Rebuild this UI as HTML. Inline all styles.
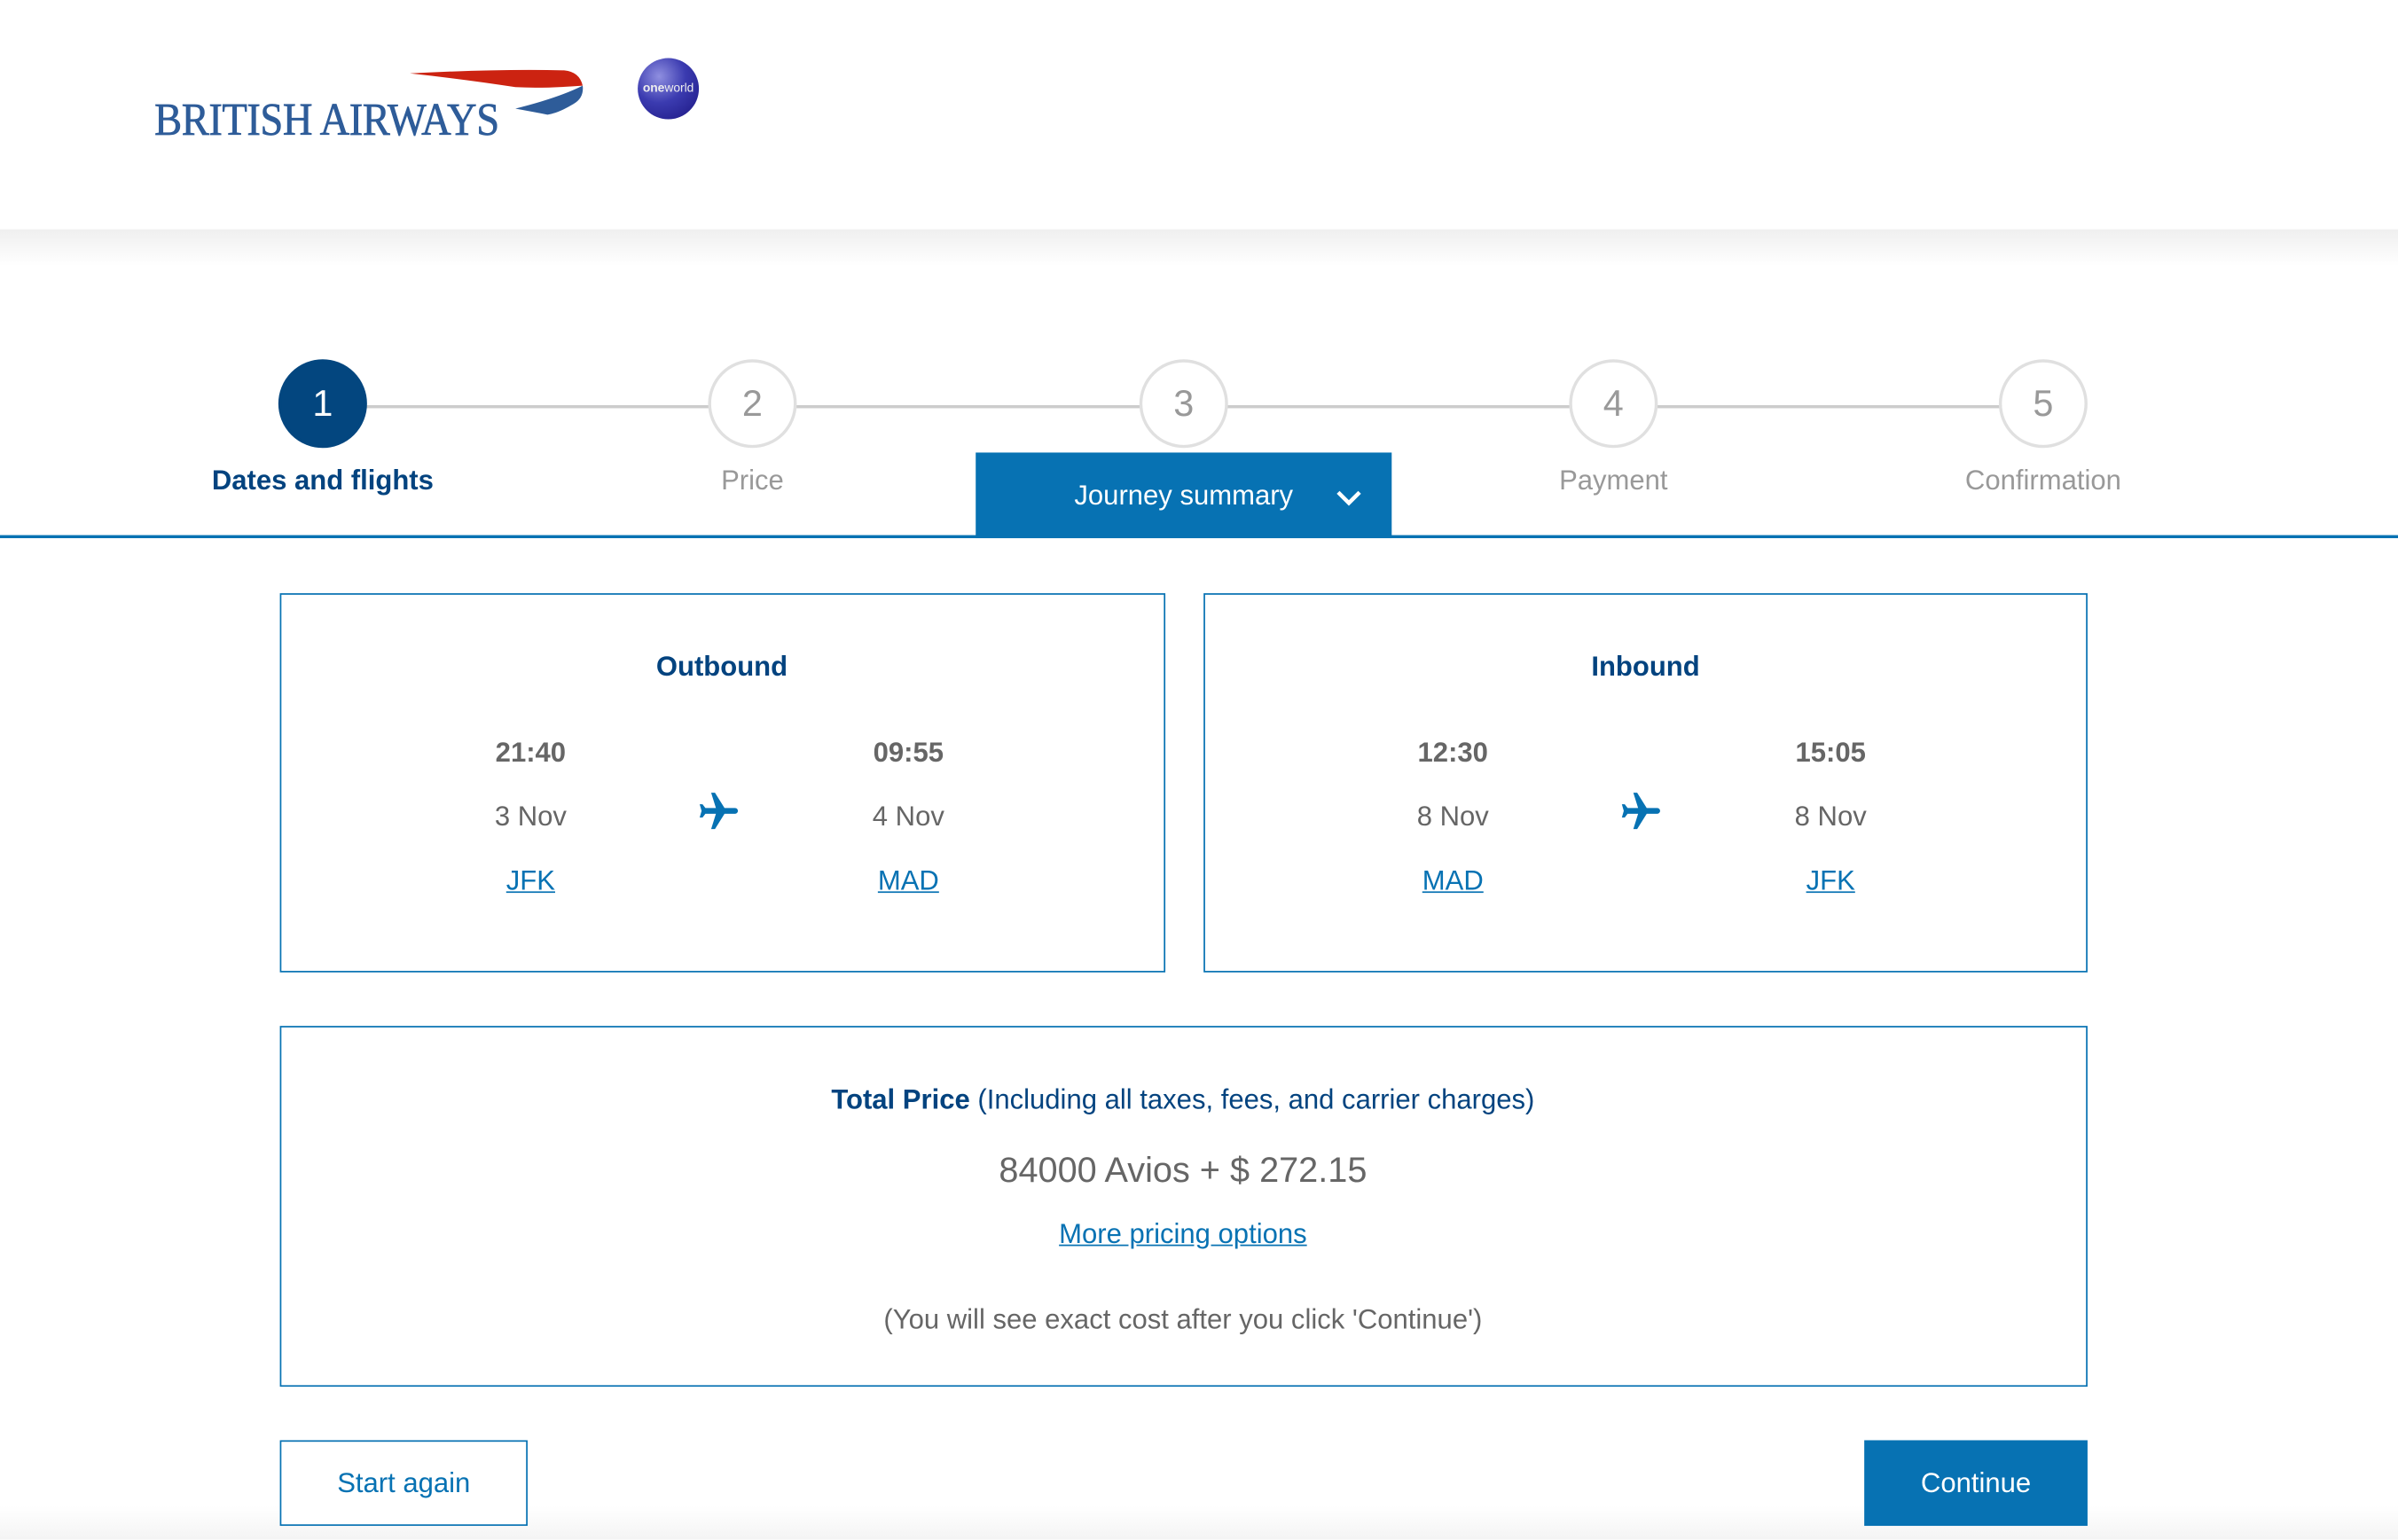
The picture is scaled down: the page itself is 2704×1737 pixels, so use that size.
<!DOCTYPE html>
<html><head><meta charset="utf-8"><style>
html,body{margin:0;padding:0;background:#fff;width:2704px;height:1736px;overflow:hidden}
#w{position:absolute;left:0;top:0;width:1568px;height:1007px;transform:scale(1.72449);transform-origin:0 0;font-family:"Liberation Sans",Arial,sans-serif;background:#fff}
.a{position:absolute}
.c{text-align:center}
.circ{position:absolute;width:54px;height:54px;border:2px solid #e0e0e0;border-radius:50%;background:#fff;color:#999;font-size:24px;line-height:56px;text-align:center;top:235px}
.lbl{position:absolute;top:304px;width:240px;text-align:center;font-size:18px;color:#999}
.box{position:absolute;border:1.5px solid #0772b3;box-sizing:border-box;background:#fff}
.t{position:absolute;width:160px;text-align:center;font-size:18px;color:#666}
.b{font-weight:bold}
.lk{color:#0772b3;text-decoration:underline}
</style></head><body><div id="w">
<div class="a" style="left:0;top:150px;width:1568px;height:24px;background:linear-gradient(#efefef,#fff)"></div>
<div class="a" style="left:0;top:985px;width:1568px;height:22px;background:linear-gradient(#fff,#f4f4f4)"></div>
<div class="a" style="left:101px;top:62px;font-family:'Liberation Serif',serif;font-size:30px;color:#2e5c99;letter-spacing:-0.3px;transform:scaleX(0.9);transform-origin:0 0;-webkit-text-stroke:0.4px #2e5c99">BRITISH AIRWAYS</div>
<svg class="a" style="left:265px;top:44px" width="120" height="36" viewBox="0 0 120 36">
<path d="M3 4 Q60 1 104 2 Q114 3 116 12 Q90 14 72 13 Q40 8 3 4Z" fill="#cc2311"/>
<path d="M116 12 Q117 20 110 24 Q100 30 93 31 Q83 29 72 27 Q100 20 116 12Z" fill="#2e5c99"/>
</svg>
<div class="a" style="left:417px;top:38px;width:40px;height:40px;border-radius:50%;background:radial-gradient(circle at 35% 30%,#8f8fe0,#3b3bb0 45%,#1b1580 100%)"></div>
<div class="a" style="left:417px;top:53px;width:40px;text-align:center;font-size:8px;color:#eee;font-weight:bold">one<span style="font-weight:normal">world</span></div>

<div class="a" style="left:211px;top:265px;width:1125px;height:2px;background:#ccc"></div>
<div class="circ" style="left:182px;background:#03467f;border-color:#03467f;color:#fff">1</div>
<div class="circ" style="left:463px">2</div>
<div class="circ" style="left:745px">3</div>
<div class="circ" style="left:1026px">4</div>
<div class="circ" style="left:1307px">5</div>
<div class="lbl b" style="left:91px;color:#03437f">Dates and flights</div>
<div class="lbl" style="left:372px">Price</div>
<div class="lbl" style="left:935px">Payment</div>
<div class="lbl" style="left:1216px">Confirmation</div>
<div class="a" style="left:638px;top:296px;width:272px;height:56px;background:#0772b3"></div>
<div class="a" style="left:638px;top:314px;width:272px;text-align:center;color:#fff;font-size:18px">Journey summary</div>
<svg class="a" style="left:872px;top:319px" width="20" height="14" viewBox="0 0 20 14"><path d="M3 3 L10 10 L17 3" stroke="#fff" stroke-width="2.6" fill="none"/></svg>
<div class="a" style="left:0;top:350px;width:1568px;height:2px;background:#0772b3"></div>

<div class="box" style="left:183px;top:388px;width:579px;height:248px">
<div class="a b" style="left:0;top:37px;width:576px;text-align:center;font-size:18px;color:#03437f">Outbound</div>
<div class="t b" style="left:83px;top:93px">21:40</div>
<div class="t" style="left:83px;top:135px">3 Nov</div>
<div class="t lk" style="left:83px;top:177px">JFK</div>
<div class="t b" style="left:330px;top:93px">09:55</div>
<div class="t" style="left:330px;top:135px">4 Nov</div>
<div class="t lk" style="left:330px;top:177px">MAD</div>
<svg class="a" style="left:271px;top:127px" width="30" height="30" viewBox="0 0 24 24"><g transform="rotate(90 12 12)"><path d="M21 16v-2l-8-5V3.5c0-.83-.67-1.5-1.5-1.5S10 2.67 10 3.5V9l-8 5v2l8-2.5V19l-2 1.5V22l3.5-1 3.5 1v-1.5L13 19v-5.5l8 2.5z" fill="#0772b3"/></g></svg>
</div>
<div class="box" style="left:787px;top:388px;width:578px;height:248px">
<div class="a b" style="left:0;top:37px;width:576px;text-align:center;font-size:18px;color:#03437f">Inbound</div>
<div class="t b" style="left:82px;top:93px">12:30</div>
<div class="t" style="left:82px;top:135px">8 Nov</div>
<div class="t lk" style="left:82px;top:177px">MAD</div>
<div class="t b" style="left:329px;top:93px">15:05</div>
<div class="t" style="left:329px;top:135px">8 Nov</div>
<div class="t lk" style="left:329px;top:177px">JFK</div>
<svg class="a" style="left:270px;top:127px" width="30" height="30" viewBox="0 0 24 24"><g transform="rotate(90 12 12)"><path d="M21 16v-2l-8-5V3.5c0-.83-.67-1.5-1.5-1.5S10 2.67 10 3.5V9l-8 5v2l8-2.5V19l-2 1.5V22l3.5-1 3.5 1v-1.5L13 19v-5.5l8 2.5z" fill="#0772b3"/></g></svg>
</div>

<div class="box" style="left:183px;top:671px;width:1182px;height:236px">
<div class="a c" style="left:0;top:37px;width:1179px;font-size:18px;color:#03437f"><b>Total Price</b> (Including all taxes, fees, and carrier charges)</div>
<div class="a c" style="left:0;top:80px;width:1179px;font-size:23px;color:#666">84000 Avios + $ 272.15</div>
<div class="a c" style="left:0;top:125px;width:1179px;font-size:18px"><span class="lk">More pricing options</span></div>
<div class="a c" style="left:0;top:181px;width:1179px;font-size:18px;color:#666">(You will see exact cost after you click 'Continue')</div>
</div>

<div class="a" style="left:183px;top:942px;width:162px;height:56px;border:1.5px solid #0772b3;box-sizing:border-box;background:#fff;color:#0772b3;font-size:18px;text-align:center;line-height:55px">Start again</div>
<div class="a" style="left:1219px;top:942px;width:146px;height:56px;background:#0772b3;color:#fff;font-size:18px;text-align:center;line-height:56px">Continue</div>
</div></body></html>
